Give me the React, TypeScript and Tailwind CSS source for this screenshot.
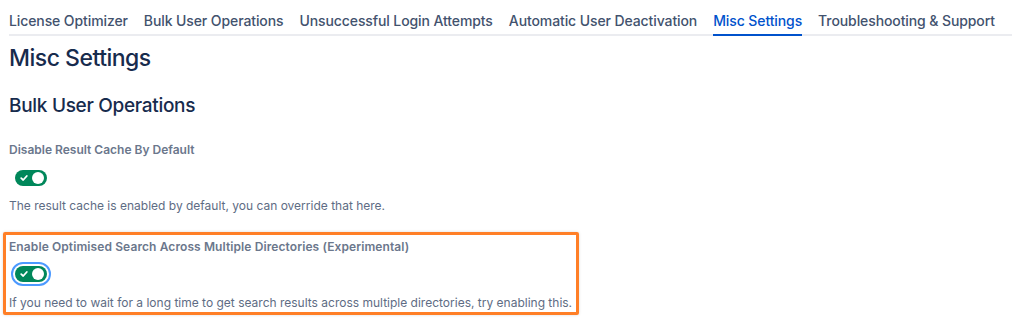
import React from "react";

const tabs = [
  "License Optimizer",
  "Bulk User Operations",
  "Unsuccessful Login Attempts",
  "Automatic User Deactivation",
  "Misc Settings",
  "Troubleshooting & Support",
];

function Toggle({ focused }: { focused?: boolean }) {
  return (
    <span
      className={`inline-flex items-center justify-between w-[32px] h-[16px] rounded-full bg-[#00875a] px-[3px] ${
        focused ? "outline-2 outline-offset-2 outline-[#4c9aff]" : ""
      }`}
    >
      <svg width="10" height="10" viewBox="0 0 10 10" className="ml-[1px]">
        <path d="M2.2 5.2 L4.2 7 L7.8 3" fill="none" stroke="white" strokeWidth="1.8" strokeLinecap="round" strokeLinejoin="round" />
      </svg>
      <span className="w-[12px] h-[12px] rounded-full bg-white" />
    </span>
  );
}

export default function App() {
  return (
    <div className="w-[1012px] h-[329px] bg-white overflow-hidden font-['Inter',sans-serif] text-[#172b4d]">
      {/* Tabs */}
      <nav className="flex gap-4 ml-[9px] pt-[11px] border-b-2 border-[#ebecf0]">
        {tabs.map((t) => (
          <div
            key={t}
            className={`text-[14px] leading-5 font-medium pb-[3px] -mb-[2px] border-b-2 tracking-[-0.1px] ${
              t === "Misc Settings" ? "text-[#0052cc] border-[#0052cc]" : "text-[#42526e] border-transparent"
            }`}
          >
            {t}
          </div>
        ))}
      </nav>

      <div className="pl-[9px]">
        <h1 className="mt-[8px] text-[23px] leading-7 font-medium tracking-[-0.5px]">Misc Settings</h1>
        <h2 className="mt-[22px] text-[19px] leading-6 font-medium tracking-[-0.3px]">Bulk User Operations</h2>

        <div className="mt-[24px]">
          <div className="text-[12px] leading-4 font-semibold text-[#6b778c]">Disable Result Cache By Default</div>
          <div className="mt-[12px] ml-[6px] flex">
            <Toggle />
          </div>
          <p className="mt-[12px] text-[12px] leading-4 text-[#5e6c84]">
            The result cache is enabled by default, you can override that here.
          </p>
        </div>
      </div>

      <div className="mt-[18px] ml-[3px] w-[576px] border-[3px] border-[#ff7f27] rounded-[2px] pl-[3px] pt-[4px] pb-[1px] shadow-[0_0_3px_rgba(0,0,0,0.15)]">
        <div className="text-[12px] leading-4 font-semibold text-[#6b778c] tracking-[0.1px]">
          Enable Optimised Search Across Multiple Directories (Experimental)
        </div>
        <div className="mt-[11px] ml-[6px] flex">
          <Toggle focused />
        </div>
        <p className="mt-[13px] text-[12px] leading-4 text-[#5e6c84]">
          If you need to wait for a long time to get search results across multiple directories, try enabling this.
        </p>
      </div>
    </div>
  );
}
